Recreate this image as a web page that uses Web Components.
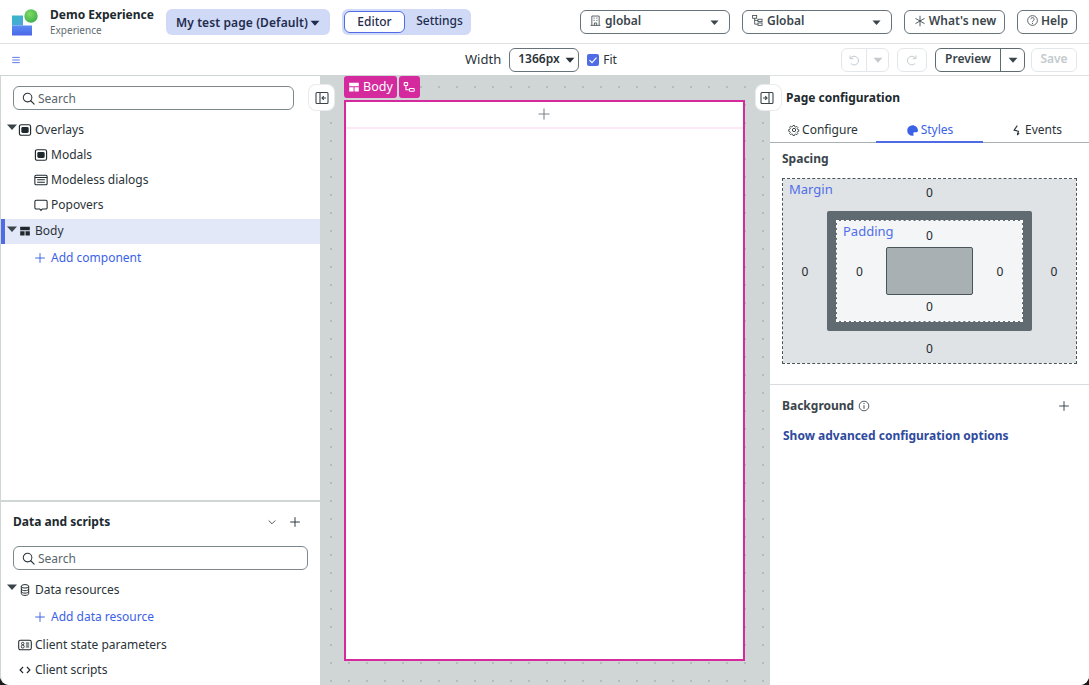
<!DOCTYPE html>
<html lang="en">
<head>
<meta charset="utf-8">
<title>Demo Experience</title>
<style>
  html { background: #1a1a1a; }
  body {
    margin: 0;
    width: 1089px;
    height: 685px;
    overflow: hidden;
    font: 12px/16px "Noto Sans", "Liberation Sans", sans-serif;
    color: #2a3338;
  }
</style>
</head>
<body>
<app-shell></app-shell>

<script>
const ICONS = {
  search: '<circle cx="7" cy="7" r="4.6" fill="none" stroke="currentColor" stroke-width="1.1"/><path d="M10.4 10.4L14 14" stroke="currentColor" stroke-width="1.2" stroke-linecap="round"/>',
  caret: '<path d="M3 5.5h10L8 11z" fill="currentColor"/>',
  modal: '<rect x="1.6" y="2" width="12.8" height="12" rx="2" fill="none" stroke="currentColor" stroke-width="1.3"/><rect x="3.8" y="4.6" width="8.4" height="6.8" rx="1.6" fill="currentColor"/>',
  modeless: '<rect x="1" y="2.5" width="14" height="11" rx="1.5" fill="none" stroke="currentColor" stroke-width="1.2"/><path d="M1 5.2h14M3.6 7.8h8.8M3.6 10.6h8.8" stroke="currentColor" stroke-width="1.2"/>',
  popover: '<path d="M2.5 2.5h11A1.5 1.5 0 0 1 15 4v7a1.5 1.5 0 0 1-1.5 1.5h-4L8 14.2 6.5 12.5h-4A1.5 1.5 0 0 1 1 11V4a1.5 1.5 0 0 1 1.5-1.5z" fill="none" stroke="currentColor" stroke-width="1.2"/>',
  layout: '<path d="M2.5 3h11v4h-11zM2.5 8.2h5v4.8h-5zM8.6 8.2h4.9v4.8H8.6z" fill="currentColor"/>',
  plus: '<path d="M8 2.5v11M2.5 8h11" stroke="currentColor" stroke-width="1.1"/>',
  database: '<ellipse cx="8" cy="3.8" rx="4.2" ry="2" fill="none" stroke="currentColor" stroke-width="1.1"/><path d="M3.8 3.8v8.4c0 1.1 1.9 2 4.2 2s4.200-.9 4.200-2V3.800M3.800 6.800c0 1.100 1.900 2 4.200 2s4.200-.9 4.200-2M3.800 9.600c0 1.100 1.900 2 4.200 2s4.200-.9 4.200-2" fill="none" stroke="currentColor" stroke-width="1.100"/>',
  state: '<rect x=".8" y="2.500" width="14.400" height="11" rx="2" fill="none" stroke="currentColor" stroke-width="1.200"/><circle cx="5.400" cy="6.300" r="1.400" fill="none" stroke="currentColor"/><circle cx="5.400" cy="9.800" r="1.700" fill="none" stroke="currentColor"/><path d="M9 5.800h3.800M9 8h3.800M9 10.200h3.800" stroke="currentColor" stroke-width="1.100"/>',
  code: '<path d="M5.800 4.600L2.400 8l3.400 3.400M10.200 4.600L13.600 8l-3.400 3.400" fill="none" stroke="currentColor" stroke-width="1.300"/>',
  chevron: '<path d="M3.600 6l4.400 4.400L12.400 6" fill="none" stroke="currentColor" stroke-width="1.100"/>',
  panelLeft: '<rect x="2" y="2.500" width="12" height="11" rx="1" fill="none" stroke="currentColor" stroke-width="1.100"/><path d="M6 2.500v11M12 8H8.200M9.800 6.200L8 8l1.800 1.800" fill="none" stroke="currentColor" stroke-width="1.100"/>',
  panelRight: '<rect x="2" y="2.500" width="12" height="11" rx="1" fill="none" stroke="currentColor" stroke-width="1.100"/><path d="M10 2.500v11M4 8h3.800M6.200 6.200L8 8 6.200 9.800" fill="none" stroke="currentColor" stroke-width="1.100"/>',
  flow: '<rect x="2.500" y="3" width="4" height="3.200" rx=".8" fill="none" stroke="currentColor" stroke-width="1.200"/><rect x="8.500" y="9.600" width="5.500" height="3.200" rx=".8" fill="none" stroke="currentColor" stroke-width="1.200"/><path d="M4.500 6.200v5h4" fill="none" stroke="currentColor" stroke-width="1.200"/>',
  hierarchy: '<rect x="2" y="1.800" width="5" height="3.400" fill="none" stroke="currentColor"/><rect x="8.600" y="6.400" width="5" height="3" fill="none" stroke="currentColor"/><rect x="8.600" y="11" width="5" height="3" fill="none" stroke="currentColor"/><path d="M4.500 5.200v7.300h4.100M4.500 7.900h4.100" fill="none" stroke="currentColor"/>',
  building: '<path d="M3.500 14V2.500h9V14M2 14h12M6.600 14v-3h2.800v3" fill="none" stroke="currentColor"/><path d="M5.600 5h1.400M9 5h1.400M5.600 7.800h1.400M9 7.800h1.400" stroke="currentColor"/>',
  star: '<path d="M8 2v12M2.800 5l10.400 6M13.200 5L2.800 11" stroke="currentColor" stroke-width="1"/>',
  help: '<circle cx="8" cy="8" r="6" fill="none" stroke="currentColor" stroke-width="1"/><path d="M6 6.400a2 2 0 1 1 3.100 1.700c-.7.4-1.100.8-1.100 1.600" fill="none" stroke="currentColor" stroke-width="1"/><circle cx="8" cy="11.500" r=".7" fill="currentColor"/>',
  undo: '<path d="M3.500 2.800v3.700h3.700M3.700 6.400a5 5 0 1 1 .6 5.400" fill="none" stroke="currentColor" stroke-width="1.100"/>',
  redo: '<path d="M12.500 2.800v3.700H8.800M12.300 6.400a5 5 0 1 0-.6 5.400" fill="none" stroke="currentColor" stroke-width="1.100"/>',
  gear: '<circle cx="8" cy="8" r="2.200" fill="none" stroke="currentColor" stroke-width="1.200"/><path d="M6.900 1.800h2.200l.4 1.800 1.400.6 1.600-1 1.500 1.500-1 1.600.6 1.400 1.700.4v2.100l-1.700.4-.6 1.400 1 1.600-1.500 1.500-1.600-1-1.400.6-.4 1.700H6.900l-.4-1.700-1.400-.6-1.600 1-1.500-1.500 1-1.600-.6-1.400-1.700-.4V7.700l1.700-.4.6-1.400-1-1.600 1.500-1.500 1.600 1 1.400-.6z" transform="translate(.3 .3) scale(.92)" fill="none" stroke="currentColor" stroke-width="1.200"/>',
  palette: '<path d="M8 1.500a6.500 6.500 0 1 0 0 13c1.400 0 1.800-1.100 1.200-2-.6-1 0-2.200 1.200-2.200h2.300c1.200 0 2-1 2-2.300 0-3.600-3-6.500-6.700-6.500z" fill="currentColor"/>',
  bolt: '<path d="M9 2L5 7.500l5.500 1.500-1.500 4.500" fill="none" stroke="currentColor" stroke-width="1.300"/><path d="M8.800 10.500L8.600 14.200 12 12z" fill="currentColor"/>',
  info: '<circle cx="8" cy="8" r="5.500" fill="none" stroke="currentColor" stroke-width="1"/><path d="M8 7.200v4" stroke="currentColor" stroke-width="1.100"/><circle cx="8" cy="5.200" r=".7" fill="currentColor"/>',
  menu: '<path d="M3 4.500h10M3 8h10M3 11.500h10" stroke="currentColor" stroke-width="1.200"/>'
};

class ShadowEl extends HTMLElement {
  constructor() {
    super();
    this.shadow = this.attachShadow({mode: "open"});
  }
  connectedCallback() {
    this.render();
  }
}

class UiIcon extends ShadowEl {
  render() {
    const size = this.getAttribute("size") || 16;
    this.shadow.innerHTML = `
      <style>
        :host { display: inline-flex; flex: none; width: ${size}px; height: ${size}px; }
        svg { display: block; width: 100%; height: 100%; }
      </style>
      <svg viewBox="0 0 16 16" aria-hidden="true">${ICONS[this.getAttribute("name")] || ""}</svg>`;
  }
}

// outlined grey button used across both bars, slot is its label
class OutlineBtn extends ShadowEl {
  render() {
    this.shadow.innerHTML = `
      <style>
        :host {
          display: inline-flex;
          align-items: center;
          box-sizing: border-box;
          height: 24px;
          padding: 0 7px 3px;
          gap: 3px;
          border: 1px solid #66737a;
          border-radius: 6px;
          background: #fff;
          font-weight: 600;
          color: #3a454b;
          white-space: nowrap;
        }
        :host([off]) { border-color: #e4e7e9; color: #c4cacd; }
      </style>
      <slot></slot>`;
  }
}

class SearchBox extends ShadowEl {
  render() {
    this.shadow.innerHTML = `
      <style>
        :host {
          display: flex;
          align-items: center;
          box-sizing: border-box;
          height: 24px;
          padding: 0 7px;
          gap: 2px;
          border: 1px solid #7c888e;
          border-radius: 6px;
          background: #fff;
          color: #59656b;
        }
        ui-icon { color: #2a3338; }
        span { padding-top: 1px; }
      </style>
      <ui-icon name="search" size="15"></ui-icon><span>Search</span>`;
  }
}

class TreeRow extends ShadowEl {
  render() {
    const caret = this.hasAttribute("caret") ? '<ui-icon class="caret" name="caret" size="16"></ui-icon>' : "";
    this.shadow.innerHTML = `
      <style>
        :host {
          display: flex;
          align-items: center;
          box-sizing: border-box;
          height: 25px;
          padding-left: var(--indent, 17px);
          position: relative;
        }
        :host([selected]) { background: #e3e8f8; box-shadow: inset 4px 0 #4f6be6; padding-bottom: 2px; }
        :host([link]) { color: #3b62e6; }
        .caret { position: absolute; left: 3px; top: 2px; color: #3a454b; }
        .glyph { margin-right: 3px; color: #1f282c; }
        :host([link]) .glyph { color: #3b62e6; margin-right: 4px; }
      </style>
      ${caret}<ui-icon class="glyph" name="${this.getAttribute("icon")}" size="14"></ui-icon><slot></slot>`;
  }
}

class AppHeader extends ShadowEl {
  render() {
    this.shadow.innerHTML = `
      <style>
        :host {
          display: flex;
          align-items: center;
          box-sizing: border-box;
          height: 44px;
          padding: 1px 12px 0;
          border-bottom: 1px solid #dfe2e4;
          background: #fff;
        }
        .logo { width: 27px; height: 27px; flex: none; }
        .brand { margin-left: 11px; width: 116px; }
        .brand b { display: block; font-weight: 700; line-height: 15px; color: #20292e; }
        .brand span { display: block; margin-top: 1px; font-size: 10px; line-height: 15px; color: #5f6b70; }
        .page {
          display: flex;
          align-items: center;
          box-sizing: border-box;
          width: 164px;
          height: 26px;
          padding: 1px 0 0 10px;
          border-radius: 6px;
          background: #d0daf7;
          font-weight: 600;
          letter-spacing: .1px;
          color: #1f2c4d;
          white-space: nowrap;
        }
        .seg {
          display: flex;
          align-items: center;
          box-sizing: border-box;
          width: 129px;
          height: 26px;
          margin-left: 12px;
          padding: 2px;
          border-radius: 6px;
          background: #d0daf7;
          font-weight: 500;
        }
        .seg span { flex: 1; text-align: center; color: #1f2c4d; }
        .seg .on {
          flex: none;
          box-sizing: border-box;
          width: 61px;
          height: 22px;
          line-height: 19px;
          border: 1px solid #4f6be6;
          border-radius: 6px;
          background: #fff;
        }
        .seg .rest { line-height: 20px; height: 22px; padding-left: 5px; }
        .right { margin-left: auto; display: flex; gap: 12px; }
        .pick { width: 150px; padding-left: 8px; padding-right: 8px; justify-content: flex-start; }
        .pick ui-icon:last-child { margin-left: auto; margin-top: 3px; color: #3a454b; }
        .news { width: 101px; justify-content: center; padding: 0 0 3px; gap: 2px; }
        .help { width: 60px; justify-content: center; padding: 0 0 3px; gap: 2px; }
      </style>
      <svg class="logo" viewBox="0 0 27 27">
        <defs>
          <linearGradient id="teal" x1="0" y1="0" x2="1" y2="1"><stop offset="0" stop-color="#35b8c4"/><stop offset="1" stop-color="#4fa6dc"/></linearGradient>
          <linearGradient id="blue" x1="0" y1="0" x2="0" y2="1"><stop offset="0" stop-color="#5a8cf2"/><stop offset="1" stop-color="#4a66e8"/></linearGradient>
          <radialGradient id="ball" cx=".4" cy=".35" r=".7"><stop offset="0" stop-color="#7fdc62"/><stop offset="1" stop-color="#3fae4e"/></radialGradient>
        </defs>
        <rect x="0" y="6.500" width="11" height="10" fill="url(#teal)"/>
        <rect x="0" y="16.500" width="20" height="10" fill="url(#blue)"/>
        <circle cx="19" cy="7" r="6.700" fill="url(#ball)"/>
      </svg>
      <div class="brand"><b>Demo Experience</b><span>Experience</span></div>
      <div class="page">My test page (Default)<ui-icon name="caret" size="14"></ui-icon></div>
      <div class="seg"><span class="on">Editor</span><span class="rest">Settings</span></div>
      <div class="right">
        <outline-btn class="pick"><ui-icon name="building" size="13"></ui-icon>global<ui-icon name="caret" size="13"></ui-icon></outline-btn>
        <outline-btn class="pick"><ui-icon name="hierarchy" size="13"></ui-icon>Global<ui-icon name="caret" size="13"></ui-icon></outline-btn>
        <outline-btn class="news"><ui-icon name="star" size="14"></ui-icon>What's new</outline-btn>
        <outline-btn class="help"><ui-icon name="help" size="13"></ui-icon>Help</outline-btn>
      </div>`;
  }
}

class AppToolbar extends ShadowEl {
  render() {
    this.shadow.innerHTML = `
      <style>
        :host {
          display: flex;
          align-items: center;
          box-sizing: border-box;
          height: 31px;
          padding: 1px 12px 0 10px;
          background: #fff;
        }
        .menu { color: #4f6be6; }
        .width { margin-left: 443px; font-size: 13px; padding-bottom: 2px; }
        .size { margin-left: 8px; width: 70px; padding: 0 3px 3px 8px; justify-content: space-between; color: #2a3338; }
        .size ui-icon { margin-top: 3px; }
        .check {
          width: 12px;
          height: 12px;
          margin-left: 8px;
          border-radius: 2px;
          background: #4f6be6;
          display: flex;
        }
        .fit { margin-left: 4px; padding-bottom: 1px; }
        .right { margin-left: auto; display: flex; align-items: center; }
        .split { padding: 0; gap: 0; }
        .split span { display: flex; align-items: center; justify-content: center; height: 100%; box-sizing: border-box; }
        .split span + span { border-left: 1px solid currentColor; }
        .undo { width: 48px; margin-right: 8px; }
        .undo span:first-child { width: 24px; }
        .undo span:last-child { width: 22px; border-left-color: #e4e7e9; }
        .redo { width: 30px; justify-content: center; margin-right: 8px; padding: 0; }
        .preview { width: 90px; margin-right: 6px; border-color: #5f6b70; }
        .preview span:first-child { width: 64px; padding-bottom: 3px; }
        .preview span:last-child { width: 24px; border-left-color: #5f6b70; }
        .save { width: 46px; justify-content: center; padding: 0 0 3px; }
      </style>
      <ui-icon class="menu" name="menu" size="12"></ui-icon>
      <span class="width">Width</span>
      <outline-btn class="size">1366px<ui-icon name="caret" size="14"></ui-icon></outline-btn>
      <span class="check"><svg viewBox="0 0 12 12" width="12" height="12"><path d="M2.500 6.200l2.500 2.500 4.500-5" fill="none" stroke="#fff" stroke-width="1.200"/></svg></span>
      <span class="fit">Fit</span>
      <div class="right">
        <outline-btn off class="split undo"><span><ui-icon name="undo" size="14"></ui-icon></span><span><ui-icon name="caret" size="14"></ui-icon></span></outline-btn>
        <outline-btn off class="redo"><ui-icon name="redo" size="14"></ui-icon></outline-btn>
        <outline-btn class="split preview"><span>Preview</span><span><ui-icon name="caret" size="14"></ui-icon></span></outline-btn>
        <outline-btn off class="save">Save</outline-btn>
      </div>`;
  }
}

class LeftPanel extends ShadowEl {
  render() {
    this.shadow.innerHTML = `
      <style>
        :host {
          display: flex;
          flex-direction: column;
          box-sizing: border-box;
          border-left: 1px solid #d0d6d6;
          border-top: 1px solid #d0d6d6;
          border-bottom-left-radius: 9px;
          background: #fff;
          min-height: 0;
        }
        .top { flex: 1; padding-top: 10px; }
        .top search-box { width: 281px; margin: 0 0 7px 12px; }
        .deep { --indent: 33px; }
        .top tree-row[selected] { margin-top: 2px; }
        .add { --indent: 32px; height: 28px; }
        .data { height: 185px; box-sizing: border-box; border-top: 2px solid #d0d6d6; }
        .head { display: flex; align-items: center; box-sizing: border-box; height: 44px; padding: 0 18px 4px 12px; gap: 10px; }
        .head b { flex: 1; font-weight: 700; color: #20292e; }
        .data search-box { width: 295px; margin: 0 0 7px 12px; }
        .add2 { --indent: 32px; height: 30px; }
      </style>
      <div class="top">
        <search-box></search-box>
        <tree-row caret icon="modal">Overlays</tree-row>
        <tree-row class="deep" icon="modal">Modals</tree-row>
        <tree-row class="deep" icon="modeless">Modeless dialogs</tree-row>
        <tree-row class="deep" icon="popover">Popovers</tree-row>
        <tree-row caret selected icon="layout">Body</tree-row>
        <tree-row class="add" link icon="plus">Add component</tree-row>
      </div>
      <div class="data">
        <div class="head"><b>Data and scripts</b><ui-icon name="chevron" size="12"></ui-icon><ui-icon name="plus" size="14"></ui-icon></div>
        <search-box></search-box>
        <tree-row caret icon="database">Data resources</tree-row>
        <tree-row class="add2" link icon="plus">Add data resource</tree-row>
        <tree-row icon="state">Client state parameters</tree-row>
        <tree-row icon="code">Client scripts</tree-row>
      </div>`;
  }
}

class CanvasStage extends ShadowEl {
  render() {
    this.shadow.innerHTML = `
      <style>
        :host {
          display: flex;
          flex-direction: column;
          box-sizing: border-box;
          padding: 0 25px 24px 24px;
          background-color: #d0d6d6;
          background-image: radial-gradient(circle, #b4bcbc 1px, transparent 1.200px);
          background-size: 18px 18px;
          background-position: 2px 3px;
          position: relative;
        }
        .tags { display: flex; gap: 2px; height: 25px; padding-top: 1px; box-sizing: border-box; }
        .tag {
          display: flex;
          align-items: center;
          box-sizing: border-box;
          height: 22px;
          padding: 0 4px 0 3px;
          gap: 2px;
          border-radius: 3px;
          background: #d42a9e;
          color: #fff;
          font-size: 12.500px;
        }
        .frame {
          flex: 1;
          box-sizing: border-box;
          border: 2px solid #d42a9e;
          background: #fff;
        }
        .slot {
          display: flex;
          align-items: center;
          justify-content: center;
          height: 25px;
          padding: 0 1px 2px 0;
          box-sizing: content-box;
          height: 23px;
          border-bottom: 2px solid #fbeaf6;
          color: #7c888e;
        }
        .toggle {
          position: absolute;
          display: flex;
          align-items: center;
          justify-content: center;
          box-sizing: border-box;
          width: 25px;
          height: 25px;
          top: 10px;
          border-radius: 7px;
          background: #fff;
          box-shadow: 0 0 0 1px #e9ecee;
          color: #3a454b;
        }
        .toggle.l { left: -11px; }
        .toggle.r { right: -11px; padding-right: 3px; }
      </style>
      <div class="tags">
        <span class="tag"><ui-icon name="layout" size="14"></ui-icon>Body</span>
        <span class="tag"><ui-icon name="flow" size="14"></ui-icon></span>
      </div>
      <div class="frame"><div class="slot"><ui-icon name="plus" size="16"></ui-icon></div></div>
      <span class="toggle l"><ui-icon name="panelLeft" size="16"></ui-icon></span>
      <span class="toggle r"><ui-icon name="panelRight" size="16"></ui-icon></span>`;
  }
}

class BoxModel extends ShadowEl {
  render() {
    this.shadow.innerHTML = `
      <style>
        :host {
          display: grid;
          grid-template-columns: 44px 205px 44px;
          grid-template-rows: 32px 120px 32px;
          box-sizing: border-box;
          width: 295px;
          height: 186px;
          border: 1px dashed #4a555a;
          background: #e0e3e6;
          background-clip: padding-box;
          place-items: center;
          color: #20292e;
        }
        .label { color: #4f6fe8; font-size: 13px; justify-self: start; align-self: start; }
        .margin-label { grid-area: 1 / 1 / 2 / 3; margin: 2px 0 0 6px; }
        .border {
          grid-area: 2 / 2;
          width: 205px;
          height: 120px;
          box-sizing: border-box;
          padding: 9px;
          border-radius: 2px;
          background: #5f6b70;
        }
        .padding {
          display: grid;
          grid-template-columns: 49px 87px 49px;
          grid-template-rows: 26px 48px 26px;
          box-sizing: border-box;
          height: 102px;
          border: 1px dashed #fff;
          background: #f4f5f7;
          background-clip: padding-box;
          place-items: center;
        }
        .padding-label { grid-area: 1 / 1 / 2 / 3; margin: 2px 0 0 6px; }
        .content {
          grid-area: 2 / 2;
          width: 87px;
          height: 48px;
          box-sizing: border-box;
          border: 1px solid #4a555a;
          border-radius: 2px;
          background: #a9b0b4;
        }
        .t { grid-area: 1 / 2; margin-bottom: 4px; }
        .b { grid-area: 3 / 2; margin-top: 4px; }
        .s { grid-area: 2 / 1; margin-top: 1px; }
        .e { grid-area: 2 / 3; margin-top: 1px; }
        .padding .t { margin: 3px 0 0; }
        .padding .b { margin: 0 0 2px; }
        .padding .s { margin-right: 4px; }
        .padding .e { margin-left: 5px; }
      </style>
      <span class="label margin-label">Margin</span>
      <span class="t">0</span><span class="s">0</span><span class="e">0</span><span class="b">0</span>
      <div class="border">
        <div class="padding">
          <span class="label padding-label">Padding</span>
          <span class="t">0</span><span class="s">0</span><span class="e">0</span><span class="b">0</span>
          <div class="content"></div>
        </div>
      </div>`;
  }
}

class ConfigPanel extends ShadowEl {
  render() {
    this.shadow.innerHTML = `
      <style>
        :host {
          display: flex;
          flex-direction: column;
          box-sizing: border-box;
          border-top: 1px solid #dfe2e4;
          background: #fff;
        }
        .title { height: 42px; line-height: 43px; padding-left: 16px; font-weight: 700; color: #20292e; }
        .tabs { display: grid; grid-template-columns: 106px 107px 106px; height: 24px; border-bottom: 1px solid #a9b0b4; box-sizing: content-box; }
        .tabs span { display: flex; align-items: center; justify-content: center; gap: 2px; height: 25px; box-sizing: border-box; padding-bottom: 1px; }
        .tabs .on { color: #3b62e6; box-shadow: inset 0 -2px #4f6be6; }
        .spacing { padding: 0 12px; border-bottom: 1px solid #d9dcde; height: 242px; box-sizing: border-box; }
        .spacing h3 { margin: 0; font: 700 12px/30px "Noto Sans", sans-serif; height: 35px; color: #3a454b; padding-top: 1px; box-sizing: border-box; }
        .bg { display: flex; align-items: center; height: 42px; padding: 0 18px 0 12px; font-weight: 700; color: #3a454b; gap: 3px; }
        .bg ui-icon:last-child { margin-left: auto; }
        .adv { margin: 0 13px; font-weight: 700; color: #2f4a9e; line-height: 18px; }
      </style>
      <div class="title">Page configuration</div>
      <div class="tabs">
        <span><ui-icon name="gear" size="12"></ui-icon>Configure</span>
        <span class="on"><ui-icon name="palette" size="13"></ui-icon>Styles</span>
        <span><ui-icon name="bolt" size="13"></ui-icon>Events</span>
      </div>
      <div class="spacing"><h3>Spacing</h3><box-model></box-model></div>
      <div class="bg">Background<ui-icon name="info" size="14"></ui-icon><ui-icon name="plus" size="14"></ui-icon></div>
      <div class="adv">Show advanced configuration options</div>`;
  }
}

class AppShell extends ShadowEl {
  render() {
    this.shadow.innerHTML = `
      <style>
        :host {
          display: flex;
          flex-direction: column;
          width: 1089px;
          height: 685px;
          overflow: hidden;
          border-radius: 0 0 9px 9px;
          background: #fff;
        }
        main {
          flex: 1;
          min-height: 0;
          display: grid;
          grid-template-columns: 320px 450px 319px;
        }
      </style>
      <app-header></app-header>
      <app-toolbar></app-toolbar>
      <main>
        <left-panel></left-panel>
        <canvas-stage></canvas-stage>
        <config-panel></config-panel>
      </main>`;
  }
}

customElements.define("ui-icon", UiIcon);
customElements.define("outline-btn", OutlineBtn);
customElements.define("search-box", SearchBox);
customElements.define("tree-row", TreeRow);
customElements.define("app-header", AppHeader);
customElements.define("app-toolbar", AppToolbar);
customElements.define("left-panel", LeftPanel);
customElements.define("canvas-stage", CanvasStage);
customElements.define("box-model", BoxModel);
customElements.define("config-panel", ConfigPanel);
customElements.define("app-shell", AppShell);
</script>
</body>
</html>
